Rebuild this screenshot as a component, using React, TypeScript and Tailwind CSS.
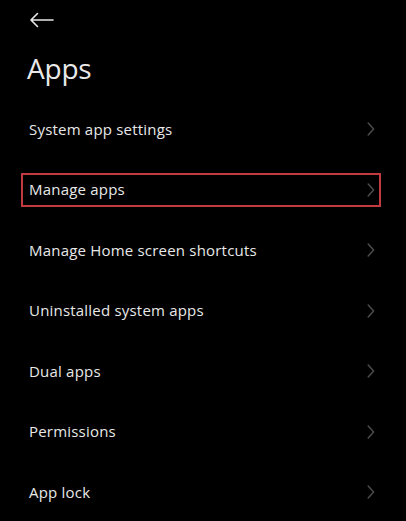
import React from "react";

const items = [
  "System app settings",
  "Manage apps",
  "Manage Home screen shortcuts",
  "Uninstalled system apps",
  "Dual apps",
  "Permissions",
  "App lock",
];

function Chevron() {
  return (
    <svg width="8" height="14" viewBox="0 0 8 14" fill="none">
      <path d="M1.2 1 L6.6 7 L1.2 13" stroke="#4b4b4b" strokeWidth="1.5" strokeLinecap="round" strokeLinejoin="round" />
    </svg>
  );
}

export default function App() {
  return (
    <div className="w-[406px] h-[521px] bg-black overflow-hidden text-[#e8e8e8]" style={{ fontFamily: '"Open Sans", "Liberation Sans", sans-serif' }}>
      <div className="pl-[29px] pt-[12px] h-[30px]">
        <svg width="26" height="16" viewBox="0 0 26 16" fill="none">
          <path d="M24 8 H2 M8.5 1.5 L2 8 L8.5 14.5" stroke="#e8e8e8" strokeWidth="1.6" strokeLinecap="round" strokeLinejoin="round" />
        </svg>
      </div>
      <h1 className="pl-[27px] mt-[20px] text-[28px] leading-[36px] font-normal tracking-[-0.2px]">Apps</h1>
      <div className="mt-[13px] flex flex-col">
        {items.map((t, i) => (
          <div key={t} className="h-[60.5px] pl-[21px] pr-[25px] flex items-center">
            <div
              className={
                "flex-1 h-[34px] flex items-center justify-between pl-[6px] pr-[4px] border-2 " +
                (i === 1 ? "border-[#c23a40]" : "border-transparent")
              }
            >
              <span className="text-[15px] leading-none tracking-[0.2px]">{t}</span>
              <Chevron />
            </div>
          </div>
        ))}
      </div>
    </div>
  );
}
